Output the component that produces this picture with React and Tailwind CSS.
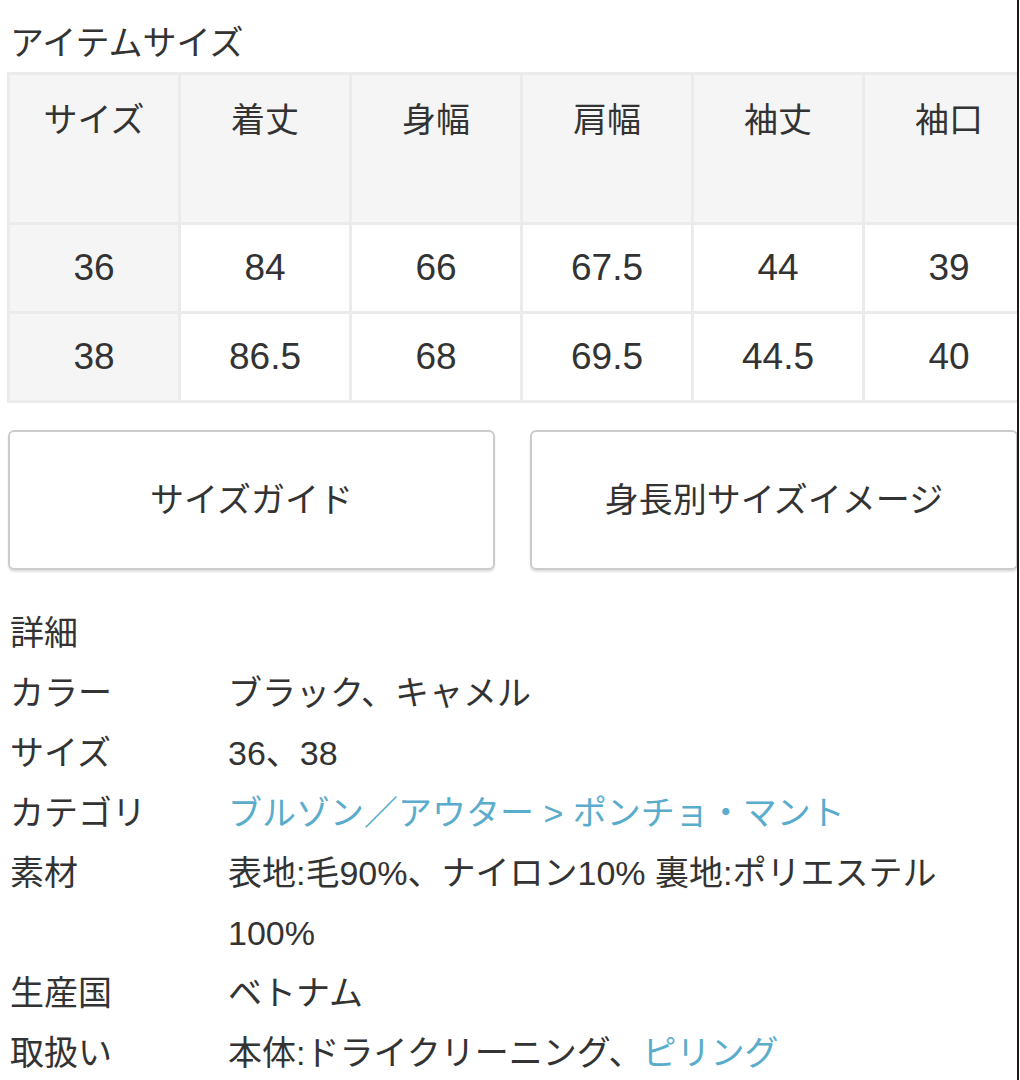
import React from "react";

const font = { fontFamily: '"Liberation Sans", "Noto Sans CJK JP", sans-serif' };

const headers = ["サイズ", "着丈", "身幅", "肩幅", "袖丈", "袖口"];
const rows = [
  ["36", "84", "66", "67.5", "44", "39"],
  ["38", "86.5", "68", "69.5", "44.5", "40"],
];

function Row({ label, children }) {
  return (
    <div className="flex leading-[60px]">
      <div className="w-[218px] shrink-0">{label}</div>
      <div className="w-[760px]">{children}</div>
    </div>
  );
}

export default function App() {
  return (
    <div
      className="flex w-[1020px] h-[1080px] bg-white text-[#333] overflow-hidden font-['Liberation_Sans','Noto_Sans_CJK_JP',sans-serif]"
      style={font}
    >
      <div className="w-[1017px] shrink-0 overflow-hidden">
        <div className="pt-[19px] pl-[10px] text-[34px] leading-[48px] h-[72px]">アイテムサイズ</div>
        <div className="w-[1040px] pl-[7px]">
          <table className="table-fixed border-collapse w-[1029px]">
            <colgroup>
              {headers.map((h) => (
                <col key={h} className="w-[171px]" />
              ))}
            </colgroup>
            <thead>
              <tr className="h-[150px]">
                {headers.map((h) => (
                  <th
                    key={h}
                    className="border-[3px] border-[#ebebeb] bg-[#f5f5f5] align-top pt-[20px] text-[34px] leading-[51px] font-normal text-center"
                  >
                    {h}
                  </th>
                ))}
              </tr>
            </thead>
            <tbody>
              {rows.map((r, i) => (
                <tr key={i} className="h-[89px]">
                  {r.map((v, j) => (
                    <td
                      key={j}
                      className={`border-[3px] border-[#ebebeb] text-center align-middle text-[37px] ${
                        j === 0 ? "bg-[#f5f5f5]" : "bg-white"
                      }`}
                    >
                      {v}
                    </td>
                  ))}
                </tr>
              ))}
            </tbody>
          </table>
        </div>

        <div className="flex gap-[35px] pl-[8px] mt-[27px]">
          <div className="w-[487px] h-[140px] shrink-0 rounded-md border-2 border-[#cccccc] shadow-[0_2px_2px_rgba(0,0,0,0.12)] flex items-center justify-center text-[34px]">
            サイズガイド
          </div>
          <div className="w-[488px] h-[140px] shrink-0 rounded-md border-2 border-[#cccccc] shadow-[0_2px_2px_rgba(0,0,0,0.12)] flex items-center justify-center text-[34px]">
            身長別サイズイメージ
          </div>
        </div>

        <div className="pl-[10px] mt-[33px] text-[34px]">
          <div className="leading-[60px]">詳細</div>
          <Row label="カラー">ブラック、キャメル</Row>
          <Row label="サイズ">36、38</Row>
          <Row label="カテゴリ">
            <span className="text-[#5aaccc]">ブルゾン／アウター &gt; ポンチョ・マント</span>
          </Row>
          <Row label="素材">表地:毛90%、ナイロン10% 裏地:ポリエステル 100%</Row>
          <Row label="生産国">ベトナム</Row>
          <Row label="取扱い">
            本体:ドライクリーニング、<span className="text-[#5aaccc]">ピリング</span>
          </Row>
        </div>
      </div>
      <div className="w-[2px] shrink-0 bg-[#1a1a1a]" />
      <div className="w-[1px] shrink-0 bg-white" />
    </div>
  );
}
